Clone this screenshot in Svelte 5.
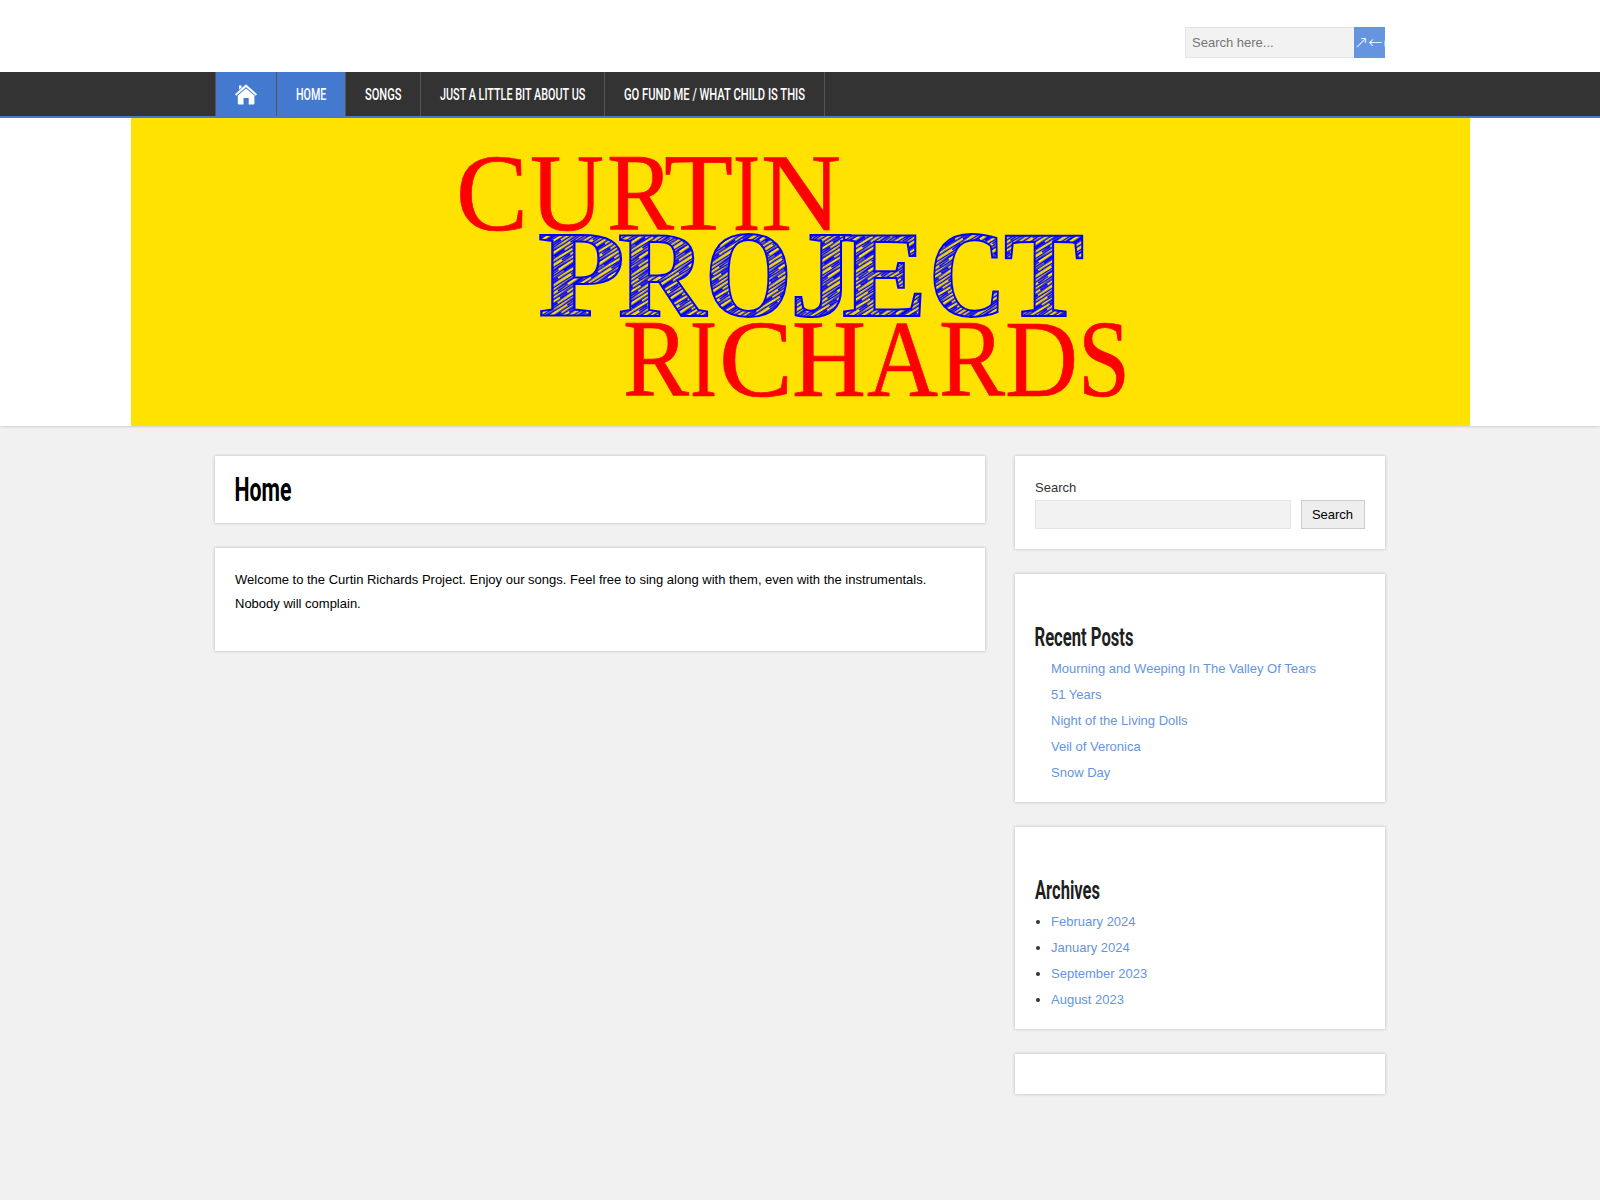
<script>
  const menu = [
    { label: 'HOME', width: 30.3, active: true },
    { label: 'SONGS', width: 36.4 },
    { label: 'JUST A LITTLE BIT ABOUT US', width: 145.3 },
    { label: 'GO FUND ME / WHAT CHILD IS THIS', width: 181 }
  ];

  const posts = [
    'Mourning and Weeping In The Valley Of Tears',
    '51 Years',
    'Night of the Living Dolls',
    'Veil of Veronica',
    'Snow Day'
  ];

  const archives = ['February 2024', 'January 2024', 'September 2023', 'August 2023'];

  // letter, left edge, advance width
  const curtin = [
    ['C', 325, 72], ['U', 399, 74], ['R', 476, 67],
    ['T', 533, 69], ['I', 602, 27], ['N', 630, 80]
  ];
  const project = [
    ['P', 407, 87], ['R', 487, 88], ['O', 574, 87], ['J', 659, 64],
    ['E', 711, 85], ['C', 798, 77], ['T', 873, 80]
  ];
  const richards = [
    ['R', 492, 66], ['I', 559, 27], ['C', 588, 74], ['H', 661, 74],
    ['A', 736, 71], ['R', 808, 66], ['D', 874, 73], ['S', 947, 52]
  ];
</script>

<header>
  <div class="top wrap">
    <form class="search">
      <input type="text" placeholder="Search here..." />
      <button type="button">&#8599;&#8592;&#9645;</button>
    </form>
  </div>

  <nav>
    <ul class="menu wrap">
      <li class="active icon">
        <svg width="24" height="24" viewBox="0 0 24 24">
          <path d="M12 2.6 1.2 12.2l1 1.2L12 5l9.8 8.4 1-1.2z" fill="#fff" stroke="#fff" stroke-width=".4" />
          <path d="M5 7.8V3.4h2.6v2.2z" fill="#fff" />
          <path d="M3.8 13.4 12 6.4l8.4 7v8q0 1.1-1.1 1.1h-4.6v-6.6H9.5v6.6H5q-1.2 0-1.2-1.1z" fill="#fff" />
        </svg>
      </li>
      {#each menu as item}
        <li class:active={item.active}>
          <svg width={item.width} height="20">
            <text x="0" y="15.5" textLength={item.width} lengthAdjust="spacingAndGlyphs">{item.label}</text>
          </svg>
        </li>
      {/each}
    </ul>
  </nav>

  <svg class="banner" width="1339" height="308" viewBox="0 0 1339 308">
    <defs>
      <pattern id="hatch" width="37" height="17" patternUnits="userSpaceOnUse" patternTransform="rotate(-33)">
        <rect width="37" height="17" fill="#ffe200" />
        <path
          d="M0 1.5 19 .9 37 1.5M0 5 13 5.6 37 5M0 8.4 22 7.8 37 8.4M0 12 17 11.3 37 12M0 15.2 25 15.8 37 15.2M5 3.5 17 3M21 6.8 33 6.4M3 10.2 12 9.8M25 13.8 35 13.4"
          fill="none" stroke="#00f" stroke-width="1.6" />
      </pattern>
    </defs>
    <rect width="1339" height="308" fill="#ffe200" />
    <g class="thin">
      {#each curtin as [letter, x, width]}
        <text {x} y="111.5" textLength={width} lengthAdjust="spacingAndGlyphs">{letter}</text>
      {/each}
      {#each richards as [letter, x, width]}
        <text {x} y="277.5" textLength={width} lengthAdjust="spacingAndGlyphs">{letter}</text>
      {/each}
    </g>
    <g class="sketch">
      {#each project as [letter, x, width]}
        <text {x} y="197.5" textLength={width} lengthAdjust="spacingAndGlyphs">{letter}</text>
      {/each}
    </g>
  </svg>
</header>

<div class="content wrap">
  <main>
    <section class="box title">
      <h1>
        <svg width="60" height="40"><text x="-.5" y="31" textLength="57" lengthAdjust="spacingAndGlyphs">Home</text></svg>
      </h1>
    </section>
    <section class="box entry">
      <p>Welcome to the Curtin Richards Project. Enjoy our songs. Feel free to sing along with them, even with the instrumentals. Nobody will complain.</p>
    </section>
  </main>

  <aside>
    <section class="box widget-search">
      <label for="s">Search</label>
      <div class="row">
        <input id="s" type="text" />
        <button type="button">Search</button>
      </div>
    </section>

    <section class="box list">
      <h2>
        <svg width="100" height="34"><text x="-.5" y="26.3" textLength="99" lengthAdjust="spacingAndGlyphs">Recent Posts</text></svg>
      </h2>
      <ul class="plain">
        {#each posts as post}
          <li><a href="#top">{post}</a></li>
        {/each}
      </ul>
    </section>

    <section class="box list">
      <h2>
        <svg width="100" height="34"><text x="0" y="26.3" textLength="65" lengthAdjust="spacingAndGlyphs">Archives</text></svg>
      </h2>
      <ul>
        {#each archives as month}
          <li><a href="#top">{month}</a></li>
        {/each}
      </ul>
    </section>

    <section class="box empty"></section>
  </aside>
</div>

<style>
  :global(body) {
    margin: 0;
    background: #f1f1f1;
    color: #333;
    font: 13px/26px "Liberation Sans", Arial, sans-serif;
  }
  .wrap {
    width: 1170px;
    margin: 0 auto;
  }
  header {
    background: #fff;
    box-shadow: 0 0 3px rgba(0, 0, 0, .25);
  }
  .top {
    height: 72px;
    display: flex;
    justify-content: flex-end;
  }
  input {
    box-sizing: border-box;
    margin: 0;
    background: #f2f2f2;
    border: 1px solid #e5e5e5;
    font: 13px "Liberation Sans", Arial, sans-serif;
  }
  .search {
    display: flex;
    height: 31px;
    margin-top: 27px;
  }
  .search input {
    width: 169px;
    padding: 0 6px;
    border-right: 0;
  }
  .search input::placeholder {
    color: #757575;
  }
  .search button {
    width: 31px;
    padding: 0;
    border: 0;
    background: #6595de;
    color: #fff;
    font: 200 17px/31px "DejaVu Sans", sans-serif;
    letter-spacing: .1px;
    text-align: left;
    white-space: nowrap;
    overflow: hidden;
  }
  nav {
    background: #333;
    border-bottom: 2px solid #437ad0;
  }
  ul {
    margin: 0;
    padding: 0 0 0 16px;
  }
  .menu {
    display: flex;
    box-sizing: border-box;
    height: 44px;
    padding: 0;
    list-style: none;
    border-left: 1px solid #555;
  }
  .menu li {
    display: flex;
    align-items: center;
    padding: 0 19px 0 18.8px;
    border-right: 1px solid #555;
  }
  .menu .icon {
    padding: 0 18px;
  }
  .menu .active {
    background: #437ad0;
  }
  .menu text {
    fill: #fff;
    font: 500 16px Roboto, sans-serif;
  }
  svg {
    display: block;
    flex: none;
    overflow: visible;
  }
  .banner {
    margin: 0 auto;
  }
  .thin text {
    fill: #f00;
    stroke: #f00;
    stroke-width: .7;
    font: 111px "Liberation Serif", serif;
  }
  .sketch text {
    fill: url(#hatch);
    stroke: #00f;
    stroke-width: 2;
    font: bold 122px "Liberation Serif", serif;
  }
  .content {
    display: flex;
    gap: 30px;
    padding: 30px 0;
  }
  main {
    width: 770px;
  }
  aside {
    width: 370px;
  }
  .box {
    box-sizing: border-box;
    margin-bottom: 25px;
    padding: 20px;
    background: #fff;
    box-shadow: 0 0 3px rgba(0, 0, 0, .25);
  }
  .title {
    height: 67px;
    padding: 14px 20px;
  }
  h1, h2 {
    margin: 0;
  }
  h1 text {
    fill: #000;
    font: bold 33px Roboto, sans-serif;
  }
  .list {
    padding-bottom: 16px;
  }
  h2 {
    padding: 26px 0 2px;
  }
  h2 text {
    fill: #1f1f1f;
    font: bold 25px Roboto, sans-serif;
  }
  .entry {
    height: 103px;
  }
  .entry p {
    margin: 0;
    color: #000;
    line-height: 24px;
  }
  .widget-search label {
    display: block;
    line-height: 24px;
  }
  .row {
    display: flex;
    gap: 10px;
    height: 29px;
  }
  .row input {
    flex: 1;
  }
  .row button {
    width: 64px;
    padding: 0 1px 0 0;
    background: #eee;
    border: 1px solid #ccc;
    color: #000;
    font: 13px "Liberation Sans", Arial, sans-serif;
  }
  .plain {
    list-style: none;
  }
  a {
    color: #6595de;
    text-decoration: none;
  }
  .empty {
    height: 40px;
    margin-bottom: 0;
  }
</style>
